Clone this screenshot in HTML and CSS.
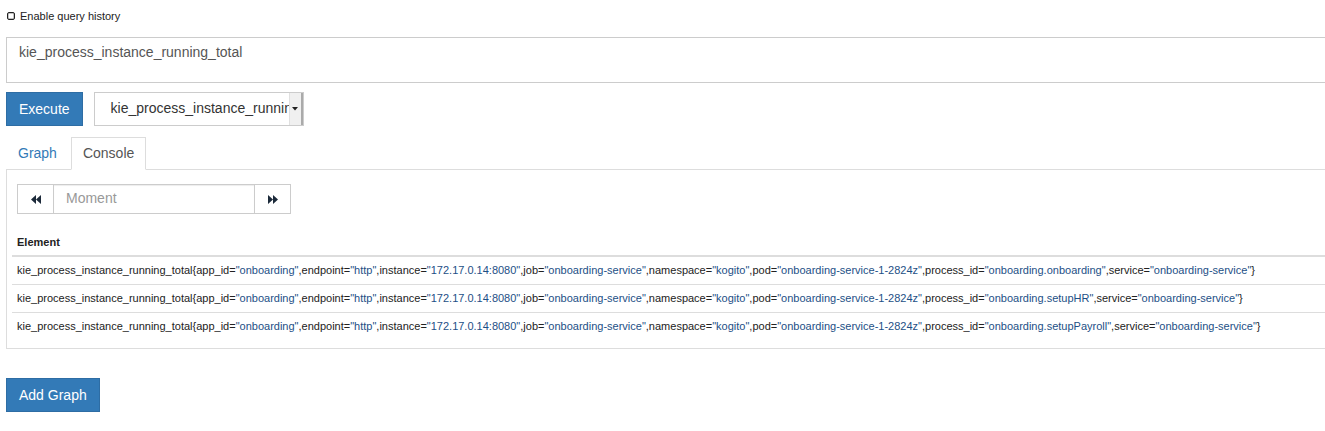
FILE: index.html
```html
<!DOCTYPE html>
<html>
<head>
<meta charset="utf-8">
<link rel="stylesheet" href="styles.css">
</head>
<body>
<div class="page">
  <div class="history">
    <span class="check"></span>
    <span class="history-label">Enable query history</span>
  </div>
  <div class="expr">kie_process_instance_running_total</div>
  <div class="actions">
    <button class="btn btn-primary">Execute</button>
    <div class="select">
      <span class="select-text">kie_process_instance_running_total</span>
      <span class="select-arrow"><svg width="6" height="4" viewBox="0 0 6 4"><path d="M0 0h6L3 3.5z" fill="#222"/></svg></span>
    </div>
  </div>
  <div class="tabs">
    <a class="tab">Graph</a>
    <a class="tab active">Console</a>
  </div>
  <div class="panel">
    <div class="moment">
      <span class="mbtn"><svg width="10" height="9" viewBox="0 0 10 9"><path d="M5 0v9L0 4.5zM10 0v9L5 4.5z" fill="#1c2a3a"/></svg></span>
      <span class="minput">Moment</span>
      <span class="mbtn"><svg width="10" height="9" viewBox="0 0 10 9"><path d="M0 0v9l5-4.5zM5 0v9l5-4.5z" fill="#1c2a3a"/></svg></span>
    </div>
    <table class="results">
      <thead><tr><th>Element</th></tr></thead>
      <tbody>
        <tr><td>kie_process_instance_running_total{app_id=<span class="v">"onboarding"</span>,endpoint=<span class="v">"http"</span>,instance=<span class="v">"172.17.0.14:8080"</span>,job=<span class="v">"onboarding-service"</span>,namespace=<span class="v">"kogito"</span>,pod=<span class="v">"onboarding-service-1-2824z"</span>,process_id=<span class="v">"onboarding.onboarding"</span>,service=<span class="v">"onboarding-service"</span>}</td></tr>
        <tr><td>kie_process_instance_running_total{app_id=<span class="v">"onboarding"</span>,endpoint=<span class="v">"http"</span>,instance=<span class="v">"172.17.0.14:8080"</span>,job=<span class="v">"onboarding-service"</span>,namespace=<span class="v">"kogito"</span>,pod=<span class="v">"onboarding-service-1-2824z"</span>,process_id=<span class="v">"onboarding.setupHR"</span>,service=<span class="v">"onboarding-service"</span>}</td></tr>
        <tr><td>kie_process_instance_running_total{app_id=<span class="v">"onboarding"</span>,endpoint=<span class="v">"http"</span>,instance=<span class="v">"172.17.0.14:8080"</span>,job=<span class="v">"onboarding-service"</span>,namespace=<span class="v">"kogito"</span>,pod=<span class="v">"onboarding-service-1-2824z"</span>,process_id=<span class="v">"onboarding.setupPayroll"</span>,service=<span class="v">"onboarding-service"</span>}</td></tr>
      </tbody>
    </table>
  </div>
  <button class="btn btn-primary add">Add Graph</button>
</div>
</body>
</html>
```
FILE: styles.css
```css
html, body {
  margin: 0;
  padding: 0;
  background: #fff;
  overflow: hidden;
}
body {
  font-family: "Liberation Sans", Arial, sans-serif;
  font-size: 14px;
  color: #333;
}
.page {
  width: 1340px;
  padding: 0 0 0 6px;
}
.history {
  display: flex;
  align-items: center;
  gap: 5px;
  height: 15px;
  padding-top: 8px;
  margin-bottom: 14px;
  padding-left: 1px;
}
.check {
  width: 6px;
  height: 6px;
  border: 1px solid #222;
  border-radius: 2px;
  box-shadow: inset 0 0 0 0.5px #888;
}
.history-label {
  font-size: 11px;
  color: #222;
}
.expr {
  box-sizing: border-box;
  height: 46px;
  border: 1px solid #ccc;
  padding: 6px 12px;
  line-height: 17px;
  color: #555;
  font-size: 14px;
}
.actions {
  display: flex;
  gap: 11px;
  margin-top: 9px;
}
.btn {
  font-family: inherit;
  font-size: 14px;
  line-height: 20px;
  padding: 6px 12px;
  border: 1px solid #2e6da4;
  border-radius: 0;
  cursor: pointer;
}
.btn-primary {
  background: #337ab7;
  color: #fff;
}
.select {
  box-sizing: border-box;
  width: 210px;
  height: 34px;
  border: 1px solid #ccc;
  display: flex;
  align-items: stretch;
  overflow: hidden;
}
.select-text {
  flex: 1;
  overflow: hidden;
  white-space: nowrap;
  padding-left: 16px;
  line-height: 30px;
  color: #333;
}
.select-arrow {
  width: 11px;
  background: #f0f0f0;
  border-left: 1px solid #e0e0e0;
  border-right: 2px solid #aaa;
  display: flex;
  align-items: center;
  justify-content: center;
}
.tabs {
  display: flex;
  margin-top: 11px;
  border-bottom: 1px solid #ddd;
}
.tab {
  padding: 5px 11px 6px;
  line-height: 20px;
  color: #337ab7;
  border: 1px solid transparent;
  margin-bottom: -1px;
  margin-right: 2px;
}
.tab.active {
  color: #555;
  border-color: #ddd;
  border-bottom-color: #fff;
  background: #fff;
}
.panel {
  border-left: 1px solid #ddd;
  border-bottom: 1px solid #ddd;
  padding: 14px 0 8px 5px;
}
.moment {
  display: flex;
  padding-left: 5px;
  height: 30px;
}
.mbtn {
  box-sizing: border-box;
  width: 37px;
  border: 1px solid #ccc;
  display: flex;
  align-items: center;
  justify-content: center;
  background: #fff;
}
.minput {
  box-sizing: border-box;
  width: 200px;
  border: 1px solid #ccc;
  border-left: none;
  border-right: none;
  color: #999;
  padding-left: 12px;
  line-height: 27px;
  box-shadow: inset 0 1px 1px rgba(0,0,0,.075);
}
.results {
  width: 100%;
  border-collapse: collapse;
  margin-top: 15px;
  font-size: 11px;
}
.results th {
  text-align: left;
  font-weight: bold;
  padding: 5px;
  line-height: 16px;
  border-bottom: 2px solid #ddd;
  color: #222;
}
.results td {
  padding: 5px;
  line-height: 17px;
  border-top: 1px solid #ddd;
  white-space: nowrap;
  color: #222;
}
.results tbody tr:first-child td {
  border-top: none;
}
.v {
  color: #1d4f86;
}
.add {
  margin-top: 29px;
}
```
